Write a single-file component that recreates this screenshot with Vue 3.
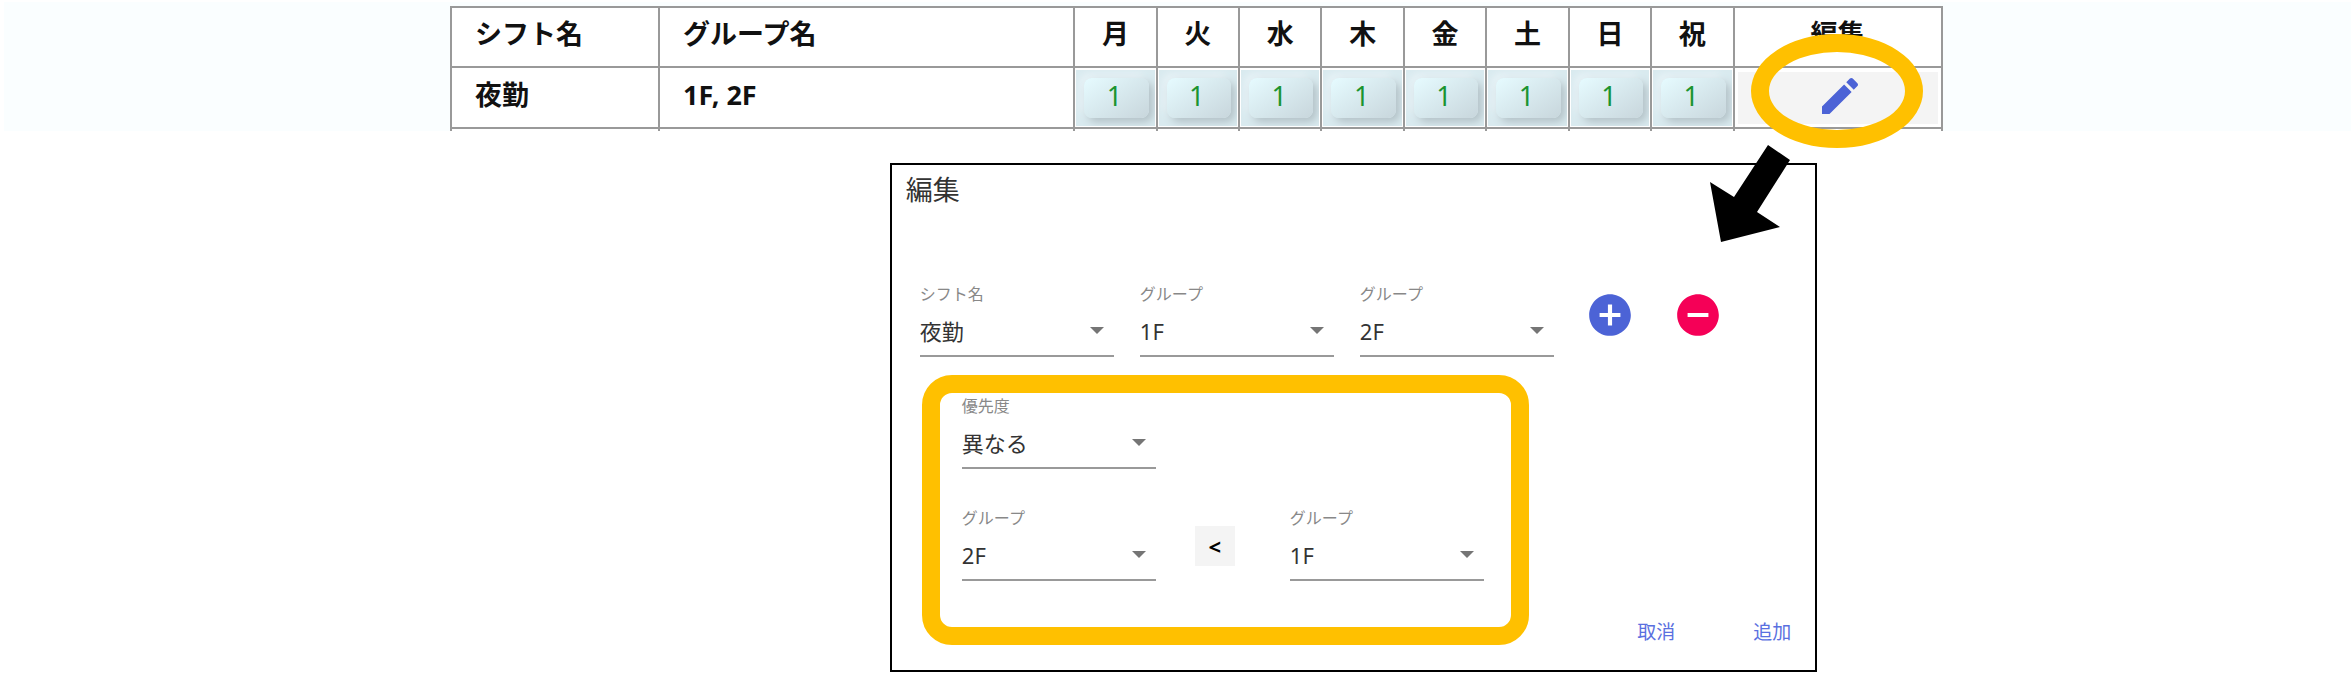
<template>
	<main class="page">
		<section class="board">
			<table class="shift-table">
				<colgroup>
					<col class="col-name" />
					<col class="col-group" />
					<col v-for="day in days" :key="day" class="col-day" />
					<col />
				</colgroup>
				<thead>
					<tr>
						<th class="left">シフト名</th>
						<th class="left">グループ名</th>
						<th v-for="day in days" :key="day">{{ day }}</th>
						<th>編集</th>
					</tr>
				</thead>
				<tbody>
					<tr v-for="shift in shifts" :key="shift.name">
						<td class="left">{{ shift.name }}</td>
						<td class="left">{{ shift.groups.join(', ') }}</td>
						<td v-for="(count, i) in shift.counts" :key="i" class="count-cell">
							<div class="count-wrap">
								<button type="button" class="count">{{ count }}</button>
							</div>
						</td>
						<td class="edit-cell">
							<button type="button" class="edit" aria-label="編集">
								<svg viewBox="0 0 24 24" width="48" height="48">
									<path d="M3 17.25V21h3.75L17.81 9.94l-3.75-3.75L3 17.25zM20.71 7.04c.39-.39.39-1.02 0-1.41l-2.34-2.34c-.39-.39-1.02-.39-1.41 0l-1.83 1.83 3.75 3.75 1.83-1.83z" />
								</svg>
							</button>
							<span class="ring"></span>
						</td>
					</tr>
					<!-- top edge of the next row -->
					<tr class="cut">
						<td v-for="n in days.length + 3" :key="n"></td>
					</tr>
				</tbody>
			</table>
		</section>

		<section class="dialog">
			<svg class="arrow" viewBox="0 0 80 97" width="80" height="97">
				<polygon points="58,0 80,15 47,67 70,82 11,97 0,37 24,52" />
			</svg>
			<h2>編集</h2>
			<div class="row">
				<div class="field">
					<label for="shift">シフト名</label>
					<div class="select">
						<select id="shift" v-model="form.shift">
							<option>夜勤</option>
						</select>
						<svg viewBox="0 0 14 7" width="14" height="7"><path d="M0 0h14L7 7z" /></svg>
					</div>
				</div>
				<div v-for="(group, i) in form.groups" :key="i" class="field">
					<label :for="'group' + i">グループ</label>
					<div class="select">
						<select :id="'group' + i" v-model="form.groups[i]">
							<option v-for="g in groupNames" :key="g">{{ g }}</option>
						</select>
						<svg viewBox="0 0 14 7" width="14" height="7"><path d="M0 0h14L7 7z" /></svg>
					</div>
				</div>
				<div class="icons">
					<button type="button" class="icon add" aria-label="グループを追加" @click="addGroup">
						<svg viewBox="0 0 24 24" width="50" height="50">
							<path d="M12 2C6.48 2 2 6.48 2 12s4.48 10 10 10 10-4.48 10-10S17.52 2 12 2zm5 11h-4v4h-2v-4H7v-2h4V7h2v4h4v2z" />
						</svg>
					</button>
					<button type="button" class="icon remove" aria-label="グループを削除" @click="removeGroup">
						<svg viewBox="0 0 24 24" width="50" height="50">
							<path d="M12 2C6.48 2 2 6.48 2 12s4.48 10 10 10 10-4.48 10-10S17.52 2 12 2zm5 11H7v-2h10v2z" />
						</svg>
					</button>
				</div>
			</div>

			<div class="priority">
				<div class="field">
					<label for="priority">優先度</label>
					<div class="select">
						<select id="priority" v-model="form.priority">
							<option>異なる</option>
							<option>同じ</option>
						</select>
						<svg viewBox="0 0 14 7" width="14" height="7"><path d="M0 0h14L7 7z" /></svg>
					</div>
				</div>
				<div class="compare">
					<div class="field">
						<label for="lower">グループ</label>
						<div class="select">
							<select id="lower" v-model="form.lower">
								<option v-for="g in groupNames" :key="g">{{ g }}</option>
							</select>
							<svg viewBox="0 0 14 7" width="14" height="7"><path d="M0 0h14L7 7z" /></svg>
						</div>
					</div>
					<span class="sign">&lt;</span>
					<div class="field">
						<label for="higher">グループ</label>
						<div class="select">
							<select id="higher" v-model="form.higher">
								<option v-for="g in groupNames" :key="g">{{ g }}</option>
							</select>
							<svg viewBox="0 0 14 7" width="14" height="7"><path d="M0 0h14L7 7z" /></svg>
						</div>
					</div>
				</div>
			</div>

			<div class="actions">
				<button type="button">取消</button>
				<button type="button">追加</button>
			</div>
		</section>
	</main>
</template>

<script setup>
import { ref } from 'vue'

const days = ['月', '火', '水', '木', '金', '土', '日', '祝']
const groupNames = ['1F', '2F']

const shifts = ref([
	{ name: '夜勤', groups: ['1F', '2F'], counts: [1, 1, 1, 1, 1, 1, 1, 1] }
])

const form = ref({
	shift: '夜勤',
	groups: ['1F', '2F'],
	priority: '異なる',
	lower: '2F',
	higher: '1F'
})

const addGroup = () => {
	form.value.groups.push('1F')
}

const removeGroup = () => {
	form.value.groups.pop()
}
</script>

<style>
body {
	background: #fff;
}
</style>

<style scoped>
.page {
	font-family: "Noto Sans", "Noto Sans CJK JP", sans-serif;
	color: #333;
	padding-top: 2px;
}
button, select {
	font-family: inherit;
	border: none;
	background: none;
	padding: 0;
	margin: 0;
	cursor: pointer;
}
.board {
	margin-left: 4px;
	padding-top: 4px;
	background: #fafeff;
}
.shift-table {
	width: 63.6%;
	margin-left: 19%;
	table-layout: fixed;
	border-collapse: collapse;
	background: #fff;
	color: #111;
	font-size: 27px;
	line-height: 32px;
}
.col-name {
	width: 13.96%;
}
.col-group {
	width: 27.85%;
}
.col-day {
	width: 5.53%;
}
th, td {
	box-sizing: border-box;
	border: 2px solid #999;
	padding: 0 0 6px;
	height: 60px;
	font-weight: bold;
	text-align: center;
}
.left {
	padding-left: 23px;
	text-align: left;
}
tbody td {
	height: 61px;
}
.count-cell, .edit-cell {
	padding: 2px 1px 1px;
	height: 61px;
}
.count-wrap {
	display: flex;
	height: 56px;
	padding: 8px 6px 8px 8px;
	box-sizing: border-box;
	background: #d9eaef;
	overflow: hidden;
}
.count {
	flex: 1;
	padding: 0 4px 4px 0;
	border-radius: 8px;
	background: linear-gradient(145deg, #e6fbff, #c8d6dc);
	box-shadow: 4px 4px 8px #b2c0c6, -4px -4px 8px #eaf4f8;
	color: #1b9430;
	font-size: 27px;
	line-height: 36px;
}
.edit-cell {
	position: relative;
	padding: 4px 3px 3px;
}
.edit {
	display: flex;
	align-items: center;
	justify-content: center;
	width: 100%;
	height: 52px;
	padding: 0 0 4px 4px;
	background: #f4f4f4;
	fill: #4c63d6;
}
.ring {
	position: absolute;
	left: 50%;
	top: -34px;
	width: 172px;
	height: 114px;
	margin-left: -87px;
	box-sizing: border-box;
	border: 18px solid #ffc000;
	border-radius: 50%;
	pointer-events: none;
}
.cut td {
	height: 3px;
	padding: 0;
	border-bottom: none;
}

.dialog {
	position: relative;
	box-sizing: border-box;
	width: 39.45%;
	margin: 32px 0 0 37.85%;
	border: 2px solid #000;
	padding: 5px 24px 24px 14px;
}
.arrow {
	position: absolute;
	top: -20px;
	right: 25px;
}
h2 {
	margin: 0;
	font-size: 27px;
	line-height: 40px;
	font-weight: normal;
}
.row {
	display: flex;
	gap: 26px;
	margin: 74px 0 18px 14px;
}
.field {
	width: 194px;
	display: flex;
	flex-direction: column;
}
.field label {
	font-size: 16px;
	line-height: 20px;
	color: #888;
}
.select {
	position: relative;
}
.select select {
	appearance: none;
	display: block;
	box-sizing: border-box;
	width: 100%;
	height: 53px;
	padding-top: 3px;
	border-bottom: 2px solid #999;
	border-radius: 0;
	color: #333;
	font-size: 22px;
}
.select svg {
	position: absolute;
	right: 10px;
	top: 23px;
	fill: #757575;
	pointer-events: none;
}
.icons {
	display: flex;
	gap: 38px;
	margin: 6px 0 0 5px;
}
.icon {
	display: block;
	width: 50px;
	height: 50px;
}
.add {
	fill: #4c63d6;
}
.remove {
	fill: #f50057;
}
.priority {
	box-sizing: border-box;
	width: 607px;
	margin-left: 16px;
	border: 18px solid #ffc000;
	border-radius: 30px;
	padding: 3px 22px 46px;
}
.compare {
	display: flex;
	margin-top: 39px;
}
.sign {
	width: 40px;
	height: 40px;
	margin: 18px 55px 0 39px;
	background: #f4f4f4;
	color: #000;
	font-size: 22px;
	font-weight: bold;
	line-height: 40px;
	text-align: center;
}
.actions {
	display: flex;
	justify-content: flex-end;
	gap: 78px;
	margin-top: -27px;
}
.actions button {
	color: #5a70e0;
	font-size: 19px;
	line-height: 28px;
}
</style>
